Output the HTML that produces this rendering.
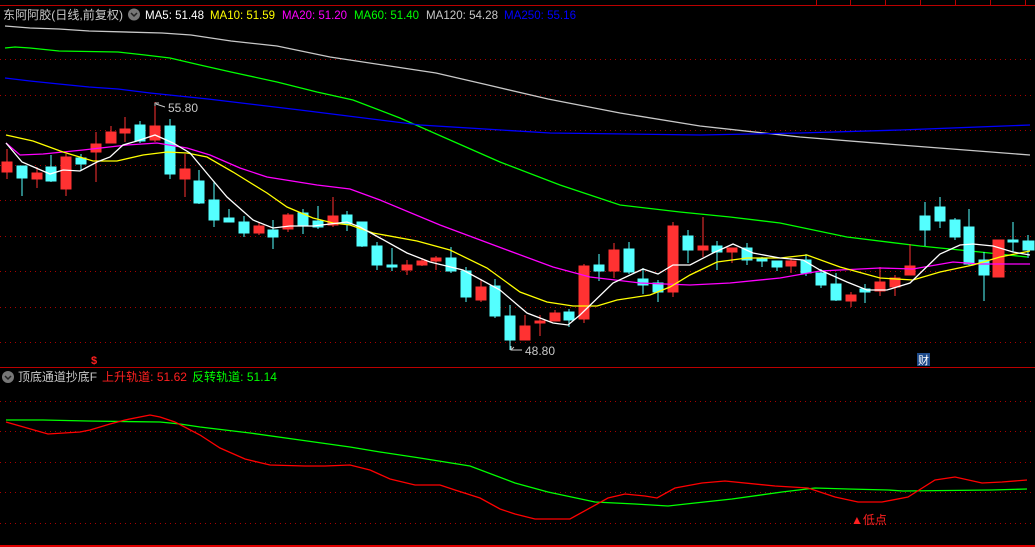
<!DOCTYPE html>
<html><head><meta charset="utf-8"><style>
html,body{margin:0;padding:0;background:#000;width:1035px;height:547px;overflow:hidden}
svg{display:block}
text{font-family:"Liberation Sans","Noto Sans CJK SC",sans-serif}
</style></head><body>
<svg width="1035" height="547" viewBox="0 0 1035 547" xmlns="http://www.w3.org/2000/svg">
<rect width="1035" height="547" fill="#000"/>
<line x1="0" y1="5.5" x2="1035" y2="5.5" stroke="#b00" stroke-width="1"/>
<g stroke="#b00"><line x1="816.5" y1="0" x2="816.5" y2="5"/><line x1="850.5" y1="0" x2="850.5" y2="5"/><line x1="885.5" y1="0" x2="885.5" y2="5"/><line x1="920.5" y1="0" x2="920.5" y2="5"/><line x1="955.5" y1="0" x2="955.5" y2="5"/><line x1="990.5" y1="0" x2="990.5" y2="5"/><line x1="1025.5" y1="0" x2="1025.5" y2="5"/></g>
<g stroke="#a00" stroke-width="1" stroke-dasharray="1,4">
<line x1="0" y1="59.5" x2="1035" y2="59.5"/><line x1="0" y1="95.5" x2="1035" y2="95.5"/><line x1="0" y1="130.5" x2="1035" y2="130.5"/><line x1="0" y1="165.5" x2="1035" y2="165.5"/><line x1="0" y1="200.5" x2="1035" y2="200.5"/><line x1="0" y1="236.5" x2="1035" y2="236.5"/><line x1="0" y1="271.5" x2="1035" y2="271.5"/><line x1="0" y1="307.5" x2="1035" y2="307.5"/><line x1="0" y1="342.5" x2="1035" y2="342.5"/>
<line x1="0" y1="401.5" x2="1035" y2="401.5"/><line x1="0" y1="431.5" x2="1035" y2="431.5"/><line x1="0" y1="462.5" x2="1035" y2="462.5"/><line x1="0" y1="492.5" x2="1035" y2="492.5"/><line x1="0" y1="523.5" x2="1035" y2="523.5"/>
</g>
<line x1="0" y1="367.5" x2="1035" y2="367.5" stroke="#b00"/>
<line x1="0" y1="546" x2="1035" y2="546" stroke="#d00" stroke-width="2"/>
<text x="3" y="19" font-size="12" fill="#c8c8c8" textLength="120" lengthAdjust="spacingAndGlyphs">东阿阿胶(日线,前复权)</text>
<circle cx="134" cy="14.5" r="6" fill="#777"/><path d="M131 13 L134 16 L137 13" stroke="#222" stroke-width="1.5" fill="none"/>
<text x="145" y="19" font-size="12" fill="#fff" textLength="59" lengthAdjust="spacingAndGlyphs">MA5: 51.48</text>
<text x="210" y="19" font-size="12" fill="#ffff00" textLength="65" lengthAdjust="spacingAndGlyphs">MA10: 51.59</text>
<text x="282" y="19" font-size="12" fill="#ff00ff" textLength="65" lengthAdjust="spacingAndGlyphs">MA20: 51.20</text>
<text x="354" y="19" font-size="12" fill="#00ff00" textLength="65" lengthAdjust="spacingAndGlyphs">MA60: 51.40</text>
<text x="426" y="19" font-size="12" fill="#c8c8c8" textLength="72" lengthAdjust="spacingAndGlyphs">MA120: 54.28</text>
<text x="504" y="19" font-size="12" fill="#0000ff" textLength="72" lengthAdjust="spacingAndGlyphs">MA250: 55.16</text>
<polyline fill="none" stroke="#c8c8c8" stroke-width="1.3" points="5,26 30,28 59,29 89,31 162,33 191,35 231,41 277,46 330,57 383,65 436,73 488,85 548,99 620,113 700,126 800,137 900,145 1030,155"/>
<polyline fill="none" stroke="#00ff00" stroke-width="1.3" points="5,48 15,47 30,48 59,51 118,52 145,55 170,58 200,65 231,72 277,82 317,92 353,100 400,118 450,140 500,162 560,185 620,205 680,212 730,217 780,223 847,237 920,246 980,252 1027,257"/>
<polyline fill="none" stroke="#0000ff" stroke-width="1.3" points="5,78 30,81 59,84 89,87 118,89 150,93 208,99 300,110 420,125 550,133 700,135 800,133 900,130 1030,125"/>
<g stroke-width="1">
<g fill="#ff3232" stroke="#ff3232">
<line x1="7" y1="149" x2="7" y2="179"/><rect x="2" y="162" width="10" height="10"/>
<line x1="37" y1="167" x2="37" y2="188"/><rect x="32" y="173" width="10" height="6"/>
<line x1="66" y1="154" x2="66" y2="196"/><rect x="61" y="157" width="10" height="32"/>
<line x1="96" y1="132" x2="96" y2="182"/><rect x="91" y="144" width="10" height="8"/>
<line x1="111" y1="126" x2="111" y2="143"/><rect x="106" y="132" width="10" height="11"/>
<line x1="125" y1="117" x2="125" y2="142"/><rect x="120" y="129" width="10" height="4"/>
<line x1="155" y1="102" x2="155" y2="142"/><rect x="150" y="126" width="10" height="14"/>
<line x1="185" y1="154" x2="185" y2="197"/><rect x="180" y="169" width="10" height="10"/>
<line x1="259" y1="222" x2="259" y2="235"/><rect x="254" y="226" width="10" height="7"/>
<line x1="288" y1="213" x2="288" y2="232"/><rect x="283" y="215" width="10" height="14"/>
<line x1="333" y1="197" x2="333" y2="227"/><rect x="328" y="216" width="10" height="9"/>
<line x1="407" y1="260" x2="407" y2="275"/><rect x="402" y="265" width="10" height="5"/>
<line x1="422" y1="258" x2="422" y2="266"/><rect x="417" y="261" width="10" height="4"/>
<line x1="436" y1="256" x2="436" y2="270"/><rect x="431" y="258" width="10" height="3"/>
<line x1="481" y1="279" x2="481" y2="302"/><rect x="476" y="287" width="10" height="13"/>
<line x1="525" y1="315" x2="525" y2="340"/><rect x="520" y="326" width="10" height="14"/>
<line x1="540" y1="315" x2="540" y2="336"/><rect x="535" y="321" width="10" height="2"/>
<line x1="555" y1="310" x2="555" y2="321"/><rect x="550" y="313" width="10" height="8"/>
<line x1="584" y1="264" x2="584" y2="323"/><rect x="579" y="266" width="10" height="53"/>
<line x1="614" y1="243" x2="614" y2="278"/><rect x="609" y="250" width="10" height="21"/>
<line x1="673" y1="222" x2="673" y2="297"/><rect x="668" y="226" width="10" height="66"/>
<line x1="703" y1="217" x2="703" y2="257"/><rect x="698" y="246" width="10" height="4"/>
<line x1="732" y1="248" x2="732" y2="263"/><rect x="727" y="248" width="10" height="4"/>
<line x1="791" y1="258" x2="791" y2="273"/><rect x="786" y="261" width="10" height="5"/>
<line x1="851" y1="292" x2="851" y2="307"/><rect x="846" y="295" width="10" height="6"/>
<line x1="880" y1="267" x2="880" y2="296"/><rect x="875" y="282" width="10" height="9"/>
<line x1="895" y1="275" x2="895" y2="296"/><rect x="890" y="278" width="10" height="9"/>
<line x1="910" y1="244" x2="910" y2="275"/><rect x="905" y="266" width="10" height="9"/>
<rect x="993" y="240" width="11" height="37"/>
</g>
<g fill="#54ffff" stroke="#54ffff">
<line x1="22" y1="166" x2="22" y2="196"/><rect x="17" y="166" width="10" height="12"/>
<line x1="51" y1="155" x2="51" y2="182"/><rect x="46" y="167" width="10" height="14"/>
<line x1="81" y1="154" x2="81" y2="171"/><rect x="76" y="158" width="10" height="6"/>
<line x1="140" y1="121" x2="140" y2="143"/><rect x="135" y="125" width="10" height="16"/>
<line x1="170" y1="119" x2="170" y2="179"/><rect x="165" y="126" width="10" height="48"/>
<line x1="199" y1="170" x2="199" y2="204"/><rect x="194" y="181" width="10" height="22"/>
<line x1="214" y1="181" x2="214" y2="227"/><rect x="209" y="200" width="10" height="20"/>
<line x1="229" y1="209" x2="229" y2="222"/><rect x="224" y="218" width="10" height="4"/>
<line x1="244" y1="216" x2="244" y2="237"/><rect x="239" y="222" width="10" height="11"/>
<line x1="273" y1="220" x2="273" y2="249"/><rect x="268" y="230" width="10" height="7"/>
<line x1="303" y1="209" x2="303" y2="234"/><rect x="298" y="213" width="10" height="13"/>
<line x1="318" y1="206" x2="318" y2="229"/><rect x="313" y="221" width="10" height="6"/>
<line x1="347" y1="211" x2="347" y2="231"/><rect x="342" y="215" width="10" height="9"/>
<line x1="362" y1="222" x2="362" y2="247"/><rect x="357" y="222" width="10" height="24"/>
<line x1="377" y1="242" x2="377" y2="270"/><rect x="372" y="246" width="10" height="19"/>
<line x1="392" y1="248" x2="392" y2="271"/><rect x="387" y="265" width="10" height="2"/>
<line x1="451" y1="247" x2="451" y2="273"/><rect x="446" y="258" width="10" height="13"/>
<line x1="466" y1="267" x2="466" y2="302"/><rect x="461" y="271" width="10" height="26"/>
<line x1="495" y1="279" x2="495" y2="318"/><rect x="490" y="286" width="10" height="30"/>
<line x1="510" y1="305" x2="510" y2="350"/><rect x="505" y="316" width="10" height="24"/>
<line x1="569" y1="309" x2="569" y2="327"/><rect x="564" y="312" width="10" height="8"/>
<line x1="599" y1="254" x2="599" y2="281"/><rect x="594" y="265" width="10" height="6"/>
<line x1="629" y1="242" x2="629" y2="274"/><rect x="624" y="249" width="10" height="23"/>
<line x1="643" y1="268" x2="643" y2="294"/><rect x="638" y="279" width="10" height="6"/>
<line x1="658" y1="280" x2="658" y2="302"/><rect x="653" y="283" width="10" height="9"/>
<line x1="688" y1="230" x2="688" y2="263"/><rect x="683" y="236" width="10" height="14"/>
<line x1="717" y1="241" x2="717" y2="270"/><rect x="712" y="246" width="10" height="6"/>
<line x1="747" y1="243" x2="747" y2="265"/><rect x="742" y="248" width="10" height="12"/>
<line x1="762" y1="257" x2="762" y2="267"/><rect x="757" y="258" width="10" height="3"/>
<line x1="777" y1="261" x2="777" y2="271"/><rect x="772" y="261" width="10" height="6"/>
<line x1="806" y1="254" x2="806" y2="276"/><rect x="801" y="260" width="10" height="13"/>
<line x1="821" y1="269" x2="821" y2="288"/><rect x="816" y="273" width="10" height="12"/>
<line x1="836" y1="273" x2="836" y2="301"/><rect x="831" y="284" width="10" height="16"/>
<line x1="865" y1="284" x2="865" y2="303"/><rect x="860" y="289" width="10" height="3"/>
<line x1="925" y1="202" x2="925" y2="246"/><rect x="920" y="216" width="10" height="14"/>
<line x1="940" y1="197" x2="940" y2="228"/><rect x="935" y="207" width="10" height="14"/>
<line x1="955" y1="218" x2="955" y2="240"/><rect x="950" y="220" width="10" height="17"/>
<line x1="969" y1="209" x2="969" y2="265"/><rect x="964" y="227" width="10" height="37"/>
<line x1="984" y1="252" x2="984" y2="301"/><rect x="979" y="260" width="10" height="15"/>
<line x1="1013" y1="222" x2="1013" y2="252"/><rect x="1008" y="240" width="10" height="2"/>
<line x1="1028" y1="235" x2="1028" y2="258"/><rect x="1023" y="241" width="11" height="9"/>
</g>
</g>
<polyline fill="none" stroke="#ff00ff" stroke-width="1.3" points="6,143 20,155 43,154 83,150 127,145 157,143 187,148 210,155 240,168 267,177 317,185 350,189 380,200 440,225 507,250 553,267 590,277 640,283 690,285 730,283 780,278 820,271 880,268 913,269 953,262 980,264 1030,264"/>
<polyline fill="none" stroke="#ffff00" stroke-width="1.3" points="6,135 33,141 63,152 93,161 117,161 143,155 167,152 187,153 207,157 233,172 267,193 287,207 313,218 333,223 350,225 373,233 417,241 450,250 487,268 520,292 547,302 573,306 597,306 617,300 650,295 670,287 690,275 717,262 747,258 780,258 807,255 840,267 880,278 913,280 940,272 973,265 1000,257 1030,251"/>
<polyline fill="none" stroke="#fff" stroke-width="1.3" points="6,143 22,162 50,174 63,170 80,171 97,162 110,157 123,145 137,141 155,135 173,143 190,153 210,177 227,197 253,220 273,228 290,226 313,226 347,222 360,227 380,238 407,253 430,262 463,270 500,290 527,313 553,323 568,325 580,315 613,283 643,269 658,274 673,265 690,265 713,253 733,244 753,253 780,258 803,260 820,270 847,282 867,290 887,290 910,283 940,254 960,245 973,244 993,246 1013,252 1030,255"/>
<path d="M155 103 L155 106 M155 103 L159 103 M156 104 L165 107" stroke="#c8c8c8" fill="none"/>
<text x="168" y="112" font-size="12" fill="#c8c8c8">55.80</text>
<path d="M511 346 L511 350 L522 350 M511 350 L514 347" stroke="#c8c8c8" fill="none"/>
<text x="525" y="355" font-size="12" fill="#c8c8c8">48.80</text>
<text x="91" y="364" font-size="11" fill="#ff2020" font-weight="bold">$</text>
<rect x="917" y="353" width="13" height="13" fill="#1d4a8a"/>
<text x="918" y="364" font-size="11" fill="#fff">财</text>
<circle cx="8" cy="377" r="6" fill="#777"/><path d="M5 376 L8 379 L11 376" stroke="#222" stroke-width="1.5" fill="none"/>
<text x="18" y="381" font-size="12" fill="#c8c8c8" textLength="79" lengthAdjust="spacingAndGlyphs">顶底通道抄底F</text>
<text x="102" y="381" font-size="12" fill="#ff2020" textLength="85" lengthAdjust="spacingAndGlyphs">上升轨道: 51.62</text>
<text x="192" y="381" font-size="12" fill="#00ff00" textLength="85" lengthAdjust="spacingAndGlyphs">反转轨道: 51.14</text>
<polyline fill="none" stroke="#00ff00" stroke-width="1.3" points="6,420 43,420 88,421 160,422 180,424 200,427 250,433 300,440 350,447 380,452 420,458 470,466 515,483 548,492 595,502 635,504 668,506 695,503 732,499 782,492 815,488 848,489 888,490 903,491 992,490 1027,489"/>
<polyline fill="none" stroke="#ff0000" stroke-width="1.3" points="6,422 20,426 48,434 80,432 90,430 110,424 125,420 150,415 160,417 175,422 200,435 220,448 245,459 270,465 305,466 325,466 350,465 370,470 390,479 415,485 440,485 455,490 480,498 500,509 515,514 535,519 570,519 608,498 625,494 645,496 657,498 675,488 702,483 725,481 775,486 808,488 835,497 858,502 882,502 908,497 935,480 955,477 982,483 1002,482 1027,480"/>
<text x="851" y="524" font-size="12" fill="#ff2020">▲低点</text>
</svg>
</body></html>
